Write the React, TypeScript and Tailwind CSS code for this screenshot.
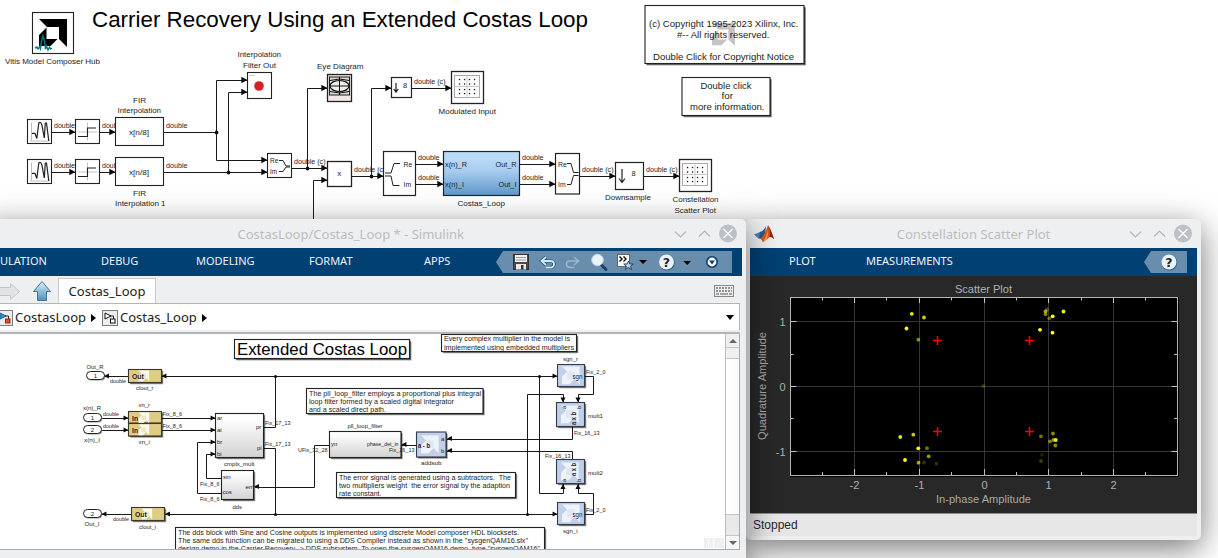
import React from "react";

type TProps = {
  x: number; y: number; s?: number; w?: number; a?: "start" | "middle" | "end";
  b?: boolean; fill?: string; r?: number; children: string;
};

function T({ x, y, s = 8, w, a = "start", b, fill = "#1c1c1c", r, children }: TProps) {
  return (
    <text x={x} y={y} fontSize={s} textAnchor={a} fill={fill} fontWeight={b ? 700 : 400}
      textLength={w} lengthAdjust="spacingAndGlyphs" xmlSpace="preserve"
      transform={r ? `rotate(${r} ${x} ${y})` : undefined}>
      {children}
    </text>
  );
}

const Sig = (p: { x: number; y: number; w?: number; children: string }) => <T s={7.2} {...p} />;
const Small = (p: { x: number; y: number; w?: number; children: string }) => <T s={5.6} {...p} />;
const Name = (p: { x: number; y: number; w?: number; children: string }) => <T s={6.1} {...p} />;

function Box({ x1, y1, x2, y2, fill = "#fff", sh = 0, sw = 1.1, stroke = "#222" }: {
  x1: number; y1: number; x2: number; y2: number; fill?: string; sh?: number; sw?: number; stroke?: string;
}) {
  return (
    <g>
      {sh > 0 && <rect x={x1 + sh} y={y1 + sh} width={x2 - x1} height={y2 - y1} fill="#000" opacity={0.6} />}
      {sh > 0 && <rect x={x1 + sh + 0.8} y={y1 + sh + 0.8} width={x2 - x1} height={y2 - y1} fill="#000" opacity={0.35} />}
      <rect x={x1} y={y1} width={x2 - x1} height={y2 - y1} fill={fill} stroke={stroke} strokeWidth={sw} />
    </g>
  );
}

const W = ({ d }: { d: string }) => <path d={d} fill="none" stroke="#1a1a1a" strokeWidth={1} />;
const Dot = ({ x, y, r = 1.9 }: { x: number; y: number; r?: number }) => <circle cx={x} cy={y} r={r} fill="#111" />;

function Arrow({ x, y, dir = 0, k = 1 }: { x: number; y: number; dir?: number; k?: number }) {
  return <path d="M0 0L-6.2 -3.2V3.2Z" fill="#0b0b0b" transform={`translate(${x} ${y}) rotate(${dir}) scale(${k})`} />;
}

function Source({ y }: { y: number }) {
  return (
    <g>
      <Box x1={27.5} y1={y} x2={51.5} y2={y + 24} />
      <path d="M31.5 3V21M30 21.500H49" transform={`translate(0 ${y})`} stroke="#bbb" fill="none" />
      <path d="M32 13.800H35L36.800 19L38.800 3.500Q41 1.500 42 6L44.300 18.500L45.300 3.500H46.500L48.800 21.500" transform={`translate(0 ${y})`} stroke="#222" fill="none" strokeWidth={1.2} />
    </g>
  );
}

function Step({ y }: { y: number }) {
  return (
    <g>
      <Box x1={75.5} y1={y} x2={99.5} y2={y + 24} />
      <path d={`M77.5 ${y + 12.5}H97.5M87.5 ${y + 3}V${y + 21}`} stroke="#c4c4c4" />
      <path d={`M78 ${y + 17}H87.5V${y + 8.5}H96`} stroke="#222" fill="none" strokeWidth={1.1} />
    </g>
  );
}

function Grid({ x, y }: { x: number; y: number }) {
  const p = [5.5, 10.5, 15.5, 20.5];
  const q = [4.5, 9, 14.5, 18.5];
  return (
    <g>
      <Box x1={x} y1={y} x2={x + 32} y2={y + 32} sw={1.3} />
      <rect x={x + 3} y={y + 4} width={25} height={22} fill="#fff" stroke="#aaa" />
      <path d={`M${x + 3} ${y + 15}h25M${x + 15.5} ${y + 4}v22`} stroke="#c8c8c8" />
      {p.map((a) => q.map((b) => <rect key={`${a}-${b}`} x={x + 2.5 + a - 0.6} y={y + 3.5 + b - 0.6} width={1.3} height={1.3} fill="#111" />))}
    </g>
  );
}

function Logo({ x, y, k = 1, fill = "#000" }: { x: number; y: number; k?: number; fill?: string }) {
  return (
    <path fill={fill} transform={`translate(${x} ${y}) scale(${k})`}
      d="M0 0H28V28L20 20V8H8ZM0 16L7.5 8.5V20H18.5L11.5 27H0Z" />
  );
}

function SolidLogo({ x, y, k = 1, fill, inner }: { x: number; y: number; k?: number; fill: string; inner: string }) {
  return (
    <g transform={`translate(${x} ${y}) scale(${k})`}>
      <path fill={fill} d="M0 0H28V28L20 20L12 28H0V16L8 8Z" />
      <path fill={inner} d="M8 8H20V20H8Z" />
    </g>
  );
}

function TopDiagram() {
  return (
    <svg className="block" width="1218" height="220" viewBox="0 0 1218 220" fontFamily="Liberation Sans, sans-serif">
      <defs>
        <linearGradient id="blue" x1="0" y1="0" x2="0" y2="1">
          <stop offset="0.15" stopColor="#badbf8" /><stop offset="0.45" stopColor="#a6cbed" /><stop offset="1" stopColor="#5f97c8" />
        </linearGradient>
      </defs>
      <T x={92} y={27} s={22.4} w={496} fill="#000">Carrier Recovery Using an Extended Costas Loop</T>
      <Box x1={32.5} y1={12.5} x2={73.5} y2={53.5} />
      <Logo x={39} y={19} />
      <path d="M35 48l2-1l1 2l1.500-2l1 2l1-8l1.500-5l1.500 5l1 8l1-3l1.500 4l1.500-3l1 2l1.500-1" fill="none" stroke="#0d7a80" strokeWidth="1.4" />
      <T x={5} y={64} w={95}>Vitis Model Composer Hub</T>

      <T x={237.500} y={57} w={43.500}>Interpolation</T>
      <T x={243} y={68} w={33}>Filter Out</T>
      <Box x1={247.5} y1={72.5} x2={271.5} y2={98.5} />
      <path d="M249 75.500h6" stroke="#ccc" />
      <circle cx="259" cy="86" r="4.800" fill="#d81e26" />

      <T x={133} y={103} w={13}>FIR</T>
      <T x={117.500} y={113} w={43.500}>Interpolation</T>
      <T x={133} y={196} w={13}>FIR</T>
      <T x={115} y={206} w={50.500}>Interpolation 1</T>
      {[0, 40].map((o) => (
        <g key={o}>
          <W d={`M52 ${132.5 + o}H75M100 ${132.5 + o}H115`} />
          <Sig x={54} y={128 + o} w={21}>double</Sig>
          <Sig x={102} y={128 + o} w={21}>double</Sig>
          <Source y={119.5 + o} />
          <Step y={119.5 + o} />
          <Box x1={115.5} y1={117.5 + o} x2={163.5} y2={145.5 + o} />
          <Arrow x={75.5} y={132 + o} />
          <Arrow x={115.5} y={132 + o} />
          <T x={129} y={134.5 + o} w={20} s={8}>x[n/8]</T>
          <Sig x={166} y={128 + o} w={21.5}>double</Sig>
        </g>
      ))}
      <W d="M164 132.500H216.500M247 80.500H216.500V160.500H267M164 172.500H267M228.500 172.500V92.500H247" />
      <Dot x={216.5} y={132.5} /><Dot x={228.5} y={172.5} />
      <Arrow x={247.5} y={80} /><Arrow x={247.5} y={92} /><Arrow x={267.5} y={160} /><Arrow x={267.5} y={172} />
      <Box x1={267.5} y1={153.5} x2={291.5} y2={177.5} />
      <T x={270} y={162.5} s={6.5}>Re</T><T x={270} y={174} s={6.5}>Im</T>
      <path d="M279 160.500h4l3 5.500h4M279 171.500h4l3-4.500h4" fill="none" stroke="#222" />

      <W d="M292 168.500H327M307.500 168.500V88.500H327M313.500 220V180.500H327" />
      <Dot x={307.5} y={168.5} />
      <Sig x={294} y={164} w={31.5}>double (c)</Sig>
      <Arrow x={327.5} y={88} /><Arrow x={327.5} y={168} /><Arrow x={327.5} y={180} />
      <T x={317} y={69} w={46.5}>Eye Diagram</T>
      <Box x1={327.5} y1={74.5} x2={351.5} y2={101.5} fill="#f3e8e8" sw={1.3} />
      <rect x="329.500" y="77" width="20" height="18" fill="#dcd5d5" stroke="#222" />
      <ellipse cx="339.500" cy="86" rx="9.500" ry="5.500" fill="#eee" stroke="#111" strokeWidth="1.200" />
      <path d="M329.500 86h20M339.500 77v18M330 80.500q9.500-3 19 0M330 91.500q9.500 3 19 0" stroke="#111" fill="none" />

      <W d="M352 176.500H383M371.500 176.500V88.500H391" />
      <Sig x={354} y={172} w={31.5}>double (c)</Sig>
      <Box x1={327.5} y1={161.5} x2={351.5} y2={186.5} sw={1.3} />
      <T x={339.2} y={176} a="middle" s={8}>x</T>
      <Dot x={371.5} y={176.5} />
      <Box x1={383.5} y1={151.5} x2={415.5} y2={195.5} sw={1.2} />
      <Arrow x={383.5} y={176} /><Arrow x={391.5} y={88} />
      <path d="M385 173h6l3-9.500h6M385 176h6l2 9.500h6.500" fill="none" stroke="#222" />
      <T x={403.5} y={166.5} s={6.8}>Re</T><T x={403.5} y={186.5} s={6.8}>Im</T>
      <Box x1={391.5} y1={77.5} x2={411.5} y2={97.5} sw={1.2} />
      <path d="M396 83v9M393.800 89l2.200 3.200l2.200-3.200" stroke="#222" fill="none" strokeWidth="1.2" />
      <T x={403} y={88} s={7.5}>8</T>
      <Sig x={414} y={84} w={31.5}>double (c)</Sig>
      <W d="M412 88.500H451" />
      <Grid x={451.5} y={71.5} />
      <Arrow x={451.5} y={88} />
      <T x={438.5} y={114} w={57.5}>Modulated Input</T>

      <W d="M416 164.500H443M416 184.500H443M520 164.500H555M520 184.500H555M580 176.500H615M644 176.500H679" />
      <Sig x={418} y={160} w={21.5}>double</Sig><Sig x={418} y={180} w={21.5}>double</Sig>
      <rect x="443.500" y="151.500" width="76" height="44" fill="url(#blue)" stroke="#222" strokeWidth="1.2" />
      <Arrow x={443.5} y={164} /><Arrow x={443.5} y={184} />
      <Sig x={445} y={167} w={22}>x(n)_R</Sig><Sig x={445} y={187} w={19}>x(n)_I</Sig>
      <Sig x={495.5} y={167} w={21}>Out_R</Sig><Sig x={498.5} y={187} w={18}>Out_I</Sig>
      <T x={457.5} y={206} w={47.5}>Costas_Loop</T>
      <Sig x={522} y={160} w={21.5}>double</Sig><Sig x={522} y={180} w={21.5}>double</Sig>
      <Box x1={555.5} y1={153.5} x2={579.5} y2={194} sw={1.2} />
      <Arrow x={555.5} y={164} /><Arrow x={555.5} y={184} />
      <T x={558} y={166.5} s={6.8}>Re</T><T x={558} y={186.5} s={6.8}>Im</T>
      <path d="M567 163.500h4l2.500 9h5M567 184.500h4l2.500-9h5" fill="none" stroke="#222" />
      <Sig x={582} y={172} w={31.5}>double (c)</Sig><Sig x={646} y={172} w={31.5}>double (c)</Sig>
      <Box x1={615.5} y1={162.5} x2={643.5} y2={189.5} sw={1.2} />
      <path d="M622 169v13M619 178.500l3 4l3-4" stroke="#222" fill="none" strokeWidth="1.2" />
      <T x={631.5} y={176} s={7.5}>8</T>
      <Arrow x={615.5} y={176} />
      <T x={605} y={200} w={46}>Downsample</T>
      <Grid x={679.5} y={159.5} />
      <Arrow x={679.5} y={176} />
      <T x={672.5} y={202} w={46}>Constellation</T>
      <T x={674.5} y={213} w={41.5}>Scatter Plot</T>

      <Box x1={645} y1={5.5} x2={804} y2={63.5} sh={1.2} />
      <Logo x={712} y={23} k={0.82} fill="#c4c4c4" />
      <T x={649} y={27} s={9.4} w={149.5}>(c) Copyright 1995-2023 Xilinx, Inc.</T>
      <T x={677} y={38} s={9.4} w={92.5}>#-- All rights reserved.</T>
      <T x={653} y={60} s={9.4} w={141}>Double Click for Copyright Notice</T>
      <Box x1={682} y1={77.5} x2={770} y2={115.5} sh={1.1} />
      <T x={700.5} y={89} s={9.3} w={51}>Double click</T>
      <T x={721.5} y={99} s={9.3} w={11.5}>for</T>
      <T x={690} y={110} s={9.3} w={74.5}>more information.</T>
    </svg>
  );
}

const Oval = ({ x, y, n }: { x: number; y: number; n: string }) => (
  <g>
    <rect x={x + 0.8} y={y + 1} width="18" height="8" rx="4" fill="#999" />
    <rect x={x} y={y} width="18" height="8" rx="4" fill="#fff" stroke="#222" />
    <T x={x + 9} y={y + 6.2} s={6} a="middle">{n}</T>
  </g>
);

function Gold({ x, y, n, h = 13 }: { x: number; y: number; n: string; h?: number }) {
  return (
    <g>
      <Box x1={x} y1={y} x2={x + 33} y2={y + h} fill="#dfcd86" sh={1} stroke="#3c3825" />
      <SolidLogo x={x + 10} y={y + 1} k={0.38} fill="#fbf9f0" inner="#efe6c5" />
      <T x={x + 3.5} y={y + 9.7} s={6.8} b>{n}</T>
    </g>
  );
}

function Azure({ x, y, w, h }: { x: number; y: number; w: number; h: number }) {
  return (
    <g>
      <Box x1={x} y1={y} x2={x + w} y2={y + h} fill="#c2cfe9" sh={1} stroke="#333a4a" />
      <SolidLogo x={x + 4.5} y={y + h / 2 - 9} k={0.63} fill="#edf2fb" inner="#dfe7f6" />
    </g>
  );
}

function Note({ x1, y1, x2, y2, lines }: { x1: number; y1: number; x2: number; y2: number; lines: [string, number, number][] }) {
  return (
    <g>
      <Box x1={x1} y1={y1} x2={x2} y2={y2} sh={1} />
      {lines.map(([t, y, w]) => <T key={y} x={x1 + 2.5} y={y} w={w} s={7.3}>{t}</T>)}
    </g>
  );
}

function LoopDiagram() {
  return (
    <svg className="block shrink-0" width="725" height="215" viewBox="0 334 725 215" fontFamily="Liberation Sans, sans-serif">
      <defs>
        <linearGradient id="gray" x1="0" y1="0" x2="0" y2="1">
          <stop offset="0.1" stopColor="#fff" /><stop offset="1" stopColor="#d2d2d2" />
        </linearGradient>
      </defs>
      <Box x1={234.5} y1={339.5} x2={409.5} y2={358.5} sh={1.2} />
      <T x={237} y={355} s={17} w={170} fill="#000">Extended Costas Loop</T>
      <Note x1={441.5} y1={334.5} x2={576.5} y2={351.5} lines={[["Every complex multiplier in the model is", 340.6, 126], ["implemented using embedded multipliers", 349.7, 130]]} />
      <Note x1={306.5} y1={388.5} x2={483} y2={413.5} lines={[["The pll_loop_filter employs a proportional plus integral", 395.5, 172], ["loop filter formed by a scaled digital integrator", 403.5, 145], ["and a scaled direct path.", 412, 77]]} />
      <Note x1={336.5} y1={472.5} x2={515.5} y2={497.5} lines={[["The error signal is generated using a subtractors.  The", 479.5, 172], ["two multipliers weight  the error signal by the adaption", 487.5, 171], ["rate constant.", 496, 42.5]]} />
      <Note x1={175.5} y1={527.5} x2={544.5} y2={552} lines={[["The dds block with Sine and Cosine outputs is implemented using discrete Model composer HDL blocksets.", 534.5, 341], ["The same dds function can be migrated to using a DDS Compiler instead as shown in the \"sysgenQAM16.slx\"", 542.5, 350], ["design demo in the Carrier Recovery -> DDS subsystem. To open the sysgenQAM16 demo, type \"sysgenQAM16\"", 550.8, 362]]} />

      <W d="M557 376.500H162M128 376.500H105M557 514.500H165M131 514.500H102M102 418.500H128M102 430.500H128M162 418.500H215M162 430.500H215" />
      <W d="M264 427.500H275.500V376.500M264 448.500H275.500V514.500M221 478.500H206.500V454.500H215M221 493.500H197.500V442.500H215" />
      <W d="M329 445.500H314.500V487.500H255M416 445.500H402M447 439.500H572.500V427M447 451.500H572.500V459" />
      <W d="M539.500 376.500V493.500H563.500V484M527.500 514.500V394.500H563.500V402M585 376.500H593.500V394.500H578.500V402M585 514.500H593.500V493.500H578.500V484" />
      <Dot x={275.5} y={376.5} r={1.6} /><Dot x={275.5} y={514.5} r={1.6} />
      <Dot x={539.5} y={376.5} r={1.6} /><Dot x={527.5} y={514.5} r={1.6} />

      <Name x={86.5} y={368.5} w={17}>Out_R</Name>
      <Oval x={86.5} y={371.5} n="1" />
      <Small x={110} y={383} w={16}>double</Small>
      <Gold x={128.5} y={369.5} n="Out" />
      <Name x={136} y={390} w={17.5}>clout_r</Name>
      <Name x={138.5} y={407} w={11.5}>xn_r</Name>
      <Gold x={128.5} y={411.5} n="In" h={11.5} />
      <Gold x={128.5} y={423.5} n="In" h={12.5} />
      <Name x={138.5} y={444} w={11.5}>xn_i</Name>
      <Name x={83} y={410} w={18}>x(n)_R</Name>
      <Oval x={83.5} y={413.5} n="1" /><Oval x={83.5} y={425.5} n="2" />
      <Name x={84} y={442} w={16}>x(n)_I</Name>
      <Small x={103} y={415.5} w={16}>double</Small><Small x={103} y={427.5} w={16}>double</Small>
      <Small x={162.5} y={415.5} w={19.5}>Fix_8_6</Small><Small x={162.5} y={427.5} w={19.5}>Fix_8_6</Small>
      <Oval x={83.5} y={509.5} n="2" />
      <Name x={84.5} y={526} w={15}>Out_I</Name>
      <Small x={113} y={521} w={16}>double</Small>
      <Gold x={131.5} y={507.5} n="Out" />
      <Name x={139} y={528.5} w={17}>clout_i</Name>
      <Arrow x={104} y={376} dir={180} k={0.8} /><Arrow x={161.5} y={376} dir={180} k={0.8} />
      <Arrow x={101.5} y={514} dir={180} k={0.8} /><Arrow x={165} y={514} dir={180} k={0.8} />
      <Arrow x={128.5} y={418} k={0.8} /><Arrow x={128.5} y={430} k={0.8} />

      <Box x1={215.5} y1={413.5} x2={263.5} y2={457.5} fill="url(#gray)" sh={1} />
      {[418, 430, 442, 454].map((y) => <Arrow key={y} x={215.5} y={y} k={0.8} />)}
      <T x={217} y={419.5} s={6}>ar</T><T x={217} y={431.5} s={6}>ai</T><T x={217} y={443.5} s={6}>br</T><T x={217} y={455.5} s={6}>bi</T>
      <T x={256} y={428.5} s={6}>pr</T><T x={257} y={449.5} s={6}>pi</T>
      <Small x={265} y={424.5} w={25.5}>Fix_17_13</Small><Small x={265} y={445.5} w={25.5}>Fix_17_13</Small>
      <Name x={224} y={466} w={30.5}>cmplx_mult</Name>
      <Box x1={221.5} y1={470.5} x2={253.5} y2={499.5} fill="url(#gray)" sh={1} />
      <T x={223} y={479} s={6}>sin</T><T x={222.5} y={494} s={6}>cos</T><T x={245.5} y={488.5} s={6}>err</T>
      <Arrow x={254} y={486.5} dir={180} k={0.8} />
      <Small x={200} y={485.5} w={19.5}>Fix_8_6</Small><Small x={200} y={500.5} w={19.5}>Fix_8_6</Small>
      <Name x={232.5} y={508.5} w={9.5}>dds</Name>

      <Name x={347.5} y={428} w={35}>pll_loop_filter</Name>
      <Box x1={329.5} y1={431.5} x2={401} y2={457.5} fill="url(#gray)" sh={1} />
      <T x={331} y={446} s={6}>yn</T><T x={367} y={446} s={5.7} w={31.5}>phase_det_in</T>
      <Arrow x={401.5} y={444.5} dir={180} k={0.8} />
      <Small x={298} y={452.2} w={29.5}>UFix_32_28</Small><Small x={389} y={452.2} w={25.5}>Fix_16_13</Small>
      <Azure x={416.5} y={432} w={29.5} h={25} />
      <T x={418} y={448} s={6.5} b w={12}>a - b</T>
      <T x={441} y={441} s={6}>a</T><T x={441} y={453} s={6}>b</T>
      <Arrow x={447} y={438.5} dir={180} k={0.8} /><Arrow x={447} y={450.5} dir={180} k={0.8} />
      <Name x={421} y={465} w={20.5}>addsub</Name>

      <Name x={563} y={361} w={15}>sgn_r</Name>
      <Azure x={557.5} y={364.5} w={27} h={22} />
      <T x={572.5} y={378.5} s={6.3} w={10}>sgn</T>
      <Arrow x={557.5} y={376} k={0.8} />
      <Small x={586} y={373.5} w={19.5}>Fix_2_0</Small>
      <Azure x={556.5} y={402.5} w={28} h={24} />
      <T x={566} y={409} s={6} r={-90}>a</T><T x={581} y={409} s={6} r={-90}>b</T>
      <T x={576} y={425} s={6.5} r={-90} b w={13}>a x b</T>
      <Arrow x={563} y={402.5} dir={90} k={0.8} /><Arrow x={578} y={402.5} dir={90} k={0.8} />
      <Name x={588} y={417.5} w={15}>mult1</Name>
      <Small x={574} y={435} w={25.5}>Fix_16_13</Small>
      <Small x={545} y={457.8} w={25.5}>Fix_16_13</Small>
      <Azure x={556.5} y={459.5} w={28} h={24} />
      <T x={566} y={482} s={6} r={-90}>a</T><T x={581} y={482} s={6} r={-90}>b</T>
      <T x={576} y={476} s={6.5} r={-90} b w={13}>a x b</T>
      <Arrow x={563} y={484} dir={-90} k={0.8} /><Arrow x={578} y={484} dir={-90} k={0.8} />
      <Name x={588} y={474.5} w={15}>mult2</Name>
      <Azure x={557.5} y={502.5} w={27} h={22} />
      <T x={572.5} y={516.5} s={6.3} w={10}>sgn</T>
      <Arrow x={557.5} y={514} k={0.8} />
      <Small x={586} y={511.5} w={19.5}>Fix_2_0</Small>
      <Name x={563} y={532.5} w={14.5}>sgn_i</Name>
      <path d="M704 538h4v10h-4zM709 538h4v10h-4zM714 538h10v10h-10z" fill="#f0f0f0" />
    </svg>
  );
}

function WindowButtons() {
  return (
    <svg className="block shrink-0" width="66" height="20" viewBox="0 0 66 20" fill="none">
      <path d="M3 7.500l5.500 5.500l5.500-5.500M27 12.500l5.500-5.500l5.500 5.500" stroke="#aeb3b8" strokeWidth="1.1" />
      <circle cx="56" cy="9.500" r="9" fill="#bdc1c5" />
      <path d="M51.500 5l9 9M60.500 5l-9 9" stroke="#fff" strokeWidth="1.1" />
    </svg>
  );
}

const HelpGlyph = ({ x, y }: { x: number; y: number }) => (
  <g>
    <circle cx={x + 0.5} cy={y + 0.7} r="7.800" fill="#2f5f8c" />
    <circle cx={x} cy={y} r="7.500" fill="#eef2f6" />
    <text x={x} y={y + 4.5} textAnchor="middle" fontFamily="DejaVu Sans, sans-serif" fontWeight="700" fontSize="12.5" fill="#1c2733">?</text>
  </g>
);

function QuickIcons() {
  return (
    <svg className="block" width="236" height="22" viewBox="496 251 236 22" fill="none">
      <rect x="513.500" y="254.500" width="15" height="15" fill="#45494d" stroke="#333" />
      <rect x="515" y="255" width="12" height="7" fill="#f1f1f1" />
      <path d="M516 257.500h10M516 260h10" stroke="#999" />
      <rect x="516" y="264" width="10" height="5.500" fill="#e8e8e8" />
      <rect x="521" y="265" width="2.500" height="4.500" fill="#333" />
      <path d="M546 257l-4.500 4l4.500 4M542 261h8.500q3.500 0 3.500 3.200t-4 3.300h-4" stroke="#234e78" strokeWidth="3.200" />
      <path d="M546 257l-4.500 4l4.500 4M542 261h8.500q3.500 0 3.500 3.200t-4 3.300h-4" stroke="#d2e9f7" strokeWidth="1.800" />
      <path d="M574 257l4.500 4l-4.500 4M578 261h-8q-3.500 0-3.500 3.200t4 3.300h4" stroke="#9cb6cc" strokeWidth="1.600" />
      <path d="M600.500 264l5.500 5.500" stroke="#154272" strokeWidth="3" strokeLinecap="round" />
      <circle cx="597.500" cy="260" r="5.800" fill="#eaf4fb" stroke="#bfd2e2" />
      <rect x="617.500" y="254.500" width="12" height="12" fill="#f8f8f8" stroke="#666" />
      <path d="M619.500 256.500l2.500 2.500l-2.500 2.500M623.500 256.500l2.500 2.500l-2.500 2.500" stroke="#111" strokeWidth="1.400" />
      <path d="M628.500 261l1.400 3h3.300l-2.600 2.200l1 3.300l-3.100-2l-3.100 2l1-3.300l-2.600-2.200h3.300z" fill="#b9cfe2" stroke="#173a62" strokeWidth="0.900" />
      <path d="M639 260h8l-4 4zM683.500 261h7.500l-3.800 4z" fill="#000" />
      <HelpGlyph x={666.5} y={262} />
      <circle cx="712" cy="262" r="5.200" fill="#fff" stroke="#0b3e70" strokeWidth="1.600" />
      <path d="M709 260.500h6l-3 4z" fill="#0b3e70" />
    </svg>
  );
}

function ModelIcon({ color }: { color?: boolean }) {
  return (
    <svg className="block" width="16" height="16" viewBox="0 0 16 16">
      <rect x="0.500" y="0.500" width="15" height="15" fill="#ececec" stroke="#7c7c7c" />
      <path d="M3 3v6l6-3z" fill={color ? "#2f8ecb" : "#fff"} stroke={color ? "#1d5f91" : "#111"} />
      <path d="M8 6h3.500v3.500" fill="none" stroke="#222" />
      <rect x="8.500" y="9" width="4.500" height="4" fill={color ? "#dd5427" : "#fff"} stroke={color ? "#8f2c10" : "#111"} />
    </svg>
  );
}

function SimulinkWindow() {
  return (
    <section className="absolute left-[-20px] top-[219px] z-20 flex h-[400px] w-[766px] flex-col rounded-tr-[5px] bg-[#eeeff1] pl-5 pr-1 shadow-[0_8px_32px_rgba(0,0,0,0.55)]">
      <header className="relative flex h-[29px] shrink-0 items-center justify-end pr-1">
        <span className="mr-[208px] whitespace-pre text-[13px] leading-[18px] text-[#b9bdc1]">CostasLoop/Costas_Loop * - Simulink</span>
        <WindowButtons />
      </header>
      <nav className="flex h-7 shrink-0 items-start overflow-hidden bg-[#004073] text-[11px] leading-[25px] text-[#eef3f7]">
        <span className="w-[101px] shrink-0">ULATION</span>
        <span className="w-[95px] shrink-0">DEBUG</span>
        <span className="w-[113px] shrink-0">MODELING</span>
        <span className="w-[115px] shrink-0">FORMAT</span>
        <span className="w-[72px] shrink-0">APPS</span>
        <div className="mt-[3px] h-[22px] w-[236px] bg-[#688dad] [clip-path:polygon(7px_0,100%_0,100%_100%,7px_100%,0_50%)]">
          <QuickIcons />
        </div>
      </nav>
      <div className="flex h-[27px] shrink-0 items-end">
        <svg className="block shrink-0" width="58" height="27" viewBox="0 0 58 27">
          <defs>
            <linearGradient id="up" x1="0" y1="0" x2="0" y2="1"><stop offset="0" stopColor="#dff0fb" /><stop offset="1" stopColor="#4a90c0" /></linearGradient>
          </defs>
          <path d="M-2 11.500H10.500V7.500L19.500 15.500L10.500 23.500V19.500H-2Z" fill="#e2e3e4" stroke="#c3c5c7" />
          <path d="M42 5.500L50.500 15.500H46.500V24.500H37.500V15.500H33.500Z" fill="url(#up)" stroke="#4a7592" />
        </svg>
        <div className="flex h-[25px] w-[98px] items-center justify-center border border-b-0 border-[#c8cacc] bg-white pt-px text-[13px] text-[#222]">Costas_Loop</div>
        <svg className="mb-[6px] ml-auto mr-2 block" width="20" height="12" viewBox="0 0 20 12">
          <rect x="0.500" y="0.500" width="19" height="11" fill="#eee" stroke="#888" />
          <path d="M2 3h16M2 6h16" stroke="#777" strokeDasharray="2 1" strokeWidth="1.500" />
          <path d="M2 9h3M6 9h8M15 9h3" stroke="#888" strokeWidth="1.500" />
        </svg>
      </div>
      <div className="mr-[2px] flex h-[27px] shrink-0 items-center border-r border-t border-[#b4b5b7] bg-white pt-px text-[13px] text-[#222]">
        <div className="-ml-[3px]"><ModelIcon color /></div>
        <span className="ml-[2px] w-[70px]">CostasLoop</span>
        <span className="ml-[6px] h-0 w-0 border-y-[4.5px] border-l-[5px] border-y-transparent border-l-black" />
        <div className="ml-[6px]"><ModelIcon /></div>
        <span className="ml-[2px] w-[76px]">Costas_Loop</span>
        <span className="ml-[6px] h-0 w-0 border-y-[4.5px] border-l-[5px] border-y-transparent border-l-black" />
        <span className="ml-auto mr-[5px] h-0 w-0 border-x-[4.5px] border-t-[5px] border-x-transparent border-t-black" />
      </div>
      <div className="mr-[2px] h-[4px] shrink-0 border-b-2 border-[#b4b5b7]" />
      <main className="mr-[2px] flex h-[216px] shrink-0 overflow-hidden border-b border-r border-[#a9abad] bg-white">
        <LoopDiagram />
        <aside className="flex w-[14px] flex-col border-l border-[#bbb] bg-white">
          <div className="flex h-[13px] items-center justify-center bg-[#f0f0f0]"><span className="h-0 w-0 border-x-4 border-b-[4px] border-x-transparent border-b-[#666]" /></div>
          <div className="h-[12px] border-y border-[#c4c4c4] bg-[#f0f0f0]" />
          <div className="h-[155px] bg-gradient-to-r from-white to-[#fafafa]" />
          <div className="h-[22px] border-y border-[#c4c4c4] bg-[#e9e9e9]" />
          <div className="flex flex-1 items-center justify-center bg-[#f6f6f6]"><span className="h-0 w-0 border-x-4 border-t-[4px] border-x-transparent border-t-[#666]" /></div>
        </aside>
      </main>
    </section>
  );
}

const points: [number, number, number][] = [
  [911.8, 313.8, 0.9], [924, 317.5, 0.8], [906.5, 328.5, 0.95], [918.3, 339.7, 0.55],
  [900.3, 437, 0.9], [913.3, 434.7, 0.8], [918.3, 448.3, 1], [927, 448.2, 0.45], [928.7, 456.3, 0.6],
  [905, 460, 1], [918.5, 462.7, 0.65], [924, 462.7, 0.2], [936.3, 463.7, 0.2], [983.5, 386, 0.2],
  [1045.5, 311.5, 0.65], [1045.5, 314.3, 0.5], [1047, 309.5, 0.3], [1049.3, 318.3, 0.4], [1052.7, 316.3, 1], [1063.5, 311.5, 0.95],
  [1040, 329.8, 1], [1052.5, 332.7, 1], [1041, 436.3, 0.45], [1053, 433.5, 0.55], [1050, 441.3, 0.5],
  [1053.5, 440, 0.6], [1055.8, 440, 0.9], [1055.3, 445.5, 0.55], [1042, 454.7, 0.12], [1041, 461, 0.25],
];

function Plot() {
  const gx = [854.5, 919.5, 984.5, 1048.5, 1113.5];
  const mx = [822.5, 886.5, 951.5, 1016.5, 1081.5, 1145.5];
  const gy = [321.5, 386.5, 451.5];
  const my = [354.5, 418.5];
  return (
    <svg className="block" width="447" height="237" viewBox="750 276 447 237" fontFamily="Liberation Sans, sans-serif">
      <rect x="790" y="297" width="389" height="180" fill="#000" />
      {gx.map((x) => <path key={x} d={`M${x} 298V475`} stroke="#363636" />)}
      {gy.map((y) => <path key={y} d={`M791 ${y}H1177`} stroke="#363636" />)}
      {gx.map((x) => <path key={x} d={`M${x} 298v5M${x} 475v-6`} stroke="#c0c0c0" />)}
      {mx.map((x) => <path key={x} d={`M${x} 298v2.500M${x} 475v-3`} stroke="#c0c0c0" />)}
      {gy.map((y) => <path key={y} d={`M791 ${y}h5.500M1177 ${y}h-5.500`} stroke="#c0c0c0" />)}
      {my.map((y) => <path key={y} d={`M791 ${y}h2.500M1177 ${y}h-3`} stroke="#c0c0c0" />)}
      <rect x="790.500" y="297.500" width="387" height="178" fill="none" stroke="#b5b5b5" />
      {points.map(([x, y, o], i) => <circle key={i} cx={x} cy={y} r="1.900" fill="#ffff10" opacity={o} />)}
      {[937.5, 1029.5].map((x) => [340.5, 431.5].map((y) => (
        <path key={`${x}-${y}`} d={`M${x - 4.5} ${y}h9M${x} ${y - 4.5}v9`} stroke="#ff0000" strokeWidth="1.500" />
      )))}
      <T x={955} y={293} s={11} w={57} fill="#b0b0b0">Scatter Plot</T>
      {([["1", 785.5, 325.5], ["0", 785.5, 390.5], ["-1", 785.5, 455.5]] as [string, number, number][]).map(([t, x, y]) => <T key={t} x={x} y={y} s={11} a="end" fill="#b0b0b0">{t}</T>)}
      {([["-2", 854.5], ["-1", 919.5], ["0", 984.5], ["1", 1048.5], ["2", 1113.5]] as [string, number][]).map(([t, x]) => <T key={t} x={x} y={489} s={11} a="middle" fill="#b0b0b0">{t}</T>)}
      <T x={936} y={503} s={11} w={95} fill="#a8a8a8">In-phase Amplitude</T>
      <T x={766} y={440} s={11} w={108} r={-90} fill="#a8a8a8">Quadrature Amplitude</T>
    </svg>
  );
}

function ScatterWindow() {
  return (
    <section className="absolute left-[746px] top-[219px] z-10 flex h-[321px] w-[455px] flex-col rounded-[5px] bg-[#eeeff1] px-1 pb-1 shadow-[0_8px_32px_rgba(0,0,0,0.55)]">
      <header className="flex h-[29px] shrink-0 items-center justify-between pl-1 pr-1">
        <svg className="block" width="22" height="20" viewBox="0 0 22 20">
          <path d="M0 10.500L6 8l3 3l-4 4z" fill="#3d87bf" />
          <path d="M6 8q4-1 6-6l-1 9l-4 4l-2-1z" fill="#2c5a86" />
          <path d="M14 1q3 5 6 14q-3-3-5-1.500t-6 5q-1-3-3-4q4-1 8-13.500z" fill="#d9541e" />
          <path d="M14 1q3 5 6 14q-3-3-4.500-2q1.500-5-1.500-12z" fill="#8f1f12" />
          <path d="M9 18q3-5 5-12q0 5-1 9z" fill="#f0a03c" />
        </svg>
        <span className="ml-[44px] text-[13px] leading-[18px] text-[#b9bdc1]">Constellation Scatter Plot</span>
        <WindowButtons />
      </header>
      <nav className="flex h-7 shrink-0 items-start bg-[#004073] pl-[39px] text-[11px] leading-[25px] text-[#f2f5f8]">
        <span className="w-[77px]">PLOT</span>
        <span>MEASUREMENTS</span>
        <div className="ml-auto mr-[10px] mt-[3px] h-[22px] w-[43px] bg-[#688dad] [clip-path:polygon(7px_0,100%_0,100%_100%,7px_100%,0_50%)]">
          <svg className="block" width="43" height="22" viewBox="0 0 43 22"><HelpGlyph x={25} y={11} /></svg>
        </div>
      </nav>
      <div className="h-[237px] shrink-0 bg-[#282828]"><Plot /></div>
      <footer className="flex h-[23px] shrink-0 items-center border-t border-[#8d8d8d] bg-[#e6e6e6] pl-[3px] font-['Liberation_Sans',sans-serif] text-[12px] text-[#262626]">Stopped</footer>
    </section>
  );
}

export default function App() {
  return (
    <div className="relative h-[558px] w-[1218px] overflow-hidden bg-white font-['Noto_Sans',sans-serif]">
      <TopDiagram />
      <ScatterWindow />
      <SimulinkWindow />
    </div>
  );
}
